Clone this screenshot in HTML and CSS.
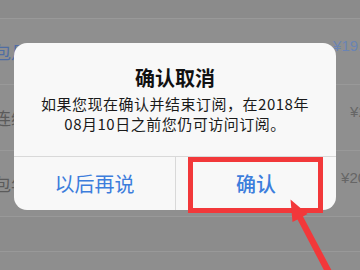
FILE: index.html
```html
<!DOCTYPE html>
<html lang="zh-CN">
<head>
<meta charset="utf-8">
<link rel="stylesheet" href="styles.css">
</head>
<body>
<div class="page">
  <div class="header"></div>
  <div class="row">
    <span class="label label-blue">包月</span>
    <span class="price price-blue price-a">¥19.90</span>
  </div>
  <div class="row">
    <span class="label">连续</span>
    <span class="price price-b">¥25.00</span>
  </div>
  <div class="row">
    <span class="label">包年</span>
    <span class="price price-c">¥20.00</span>
  </div>
  <div class="band"></div>
  <div class="footer"></div>

  <div class="dialog">
    <div class="dialog-content">
      <div class="dialog-title">确认取消</div>
      <div class="dialog-text">如果您现在确认并结束订阅，在2018年<br>08月10日之前您仍可访问订阅。</div>
    </div>
    <div class="dialog-buttons">
      <div class="btn">以后再说</div>
      <div class="btn btn-primary">确认</div>
    </div>
  </div>

  <div class="highlight"></div>
  <svg class="arrow" width="360" height="270" viewBox="0 0 360 270">
    <polygon points="290.5,199.5 307.5,214 303,216.5 333.5,274 327.5,277 297.5,219.5 292.5,222" fill="#f2383a"/>
  </svg>
</div>
</body>
</html>
```
FILE: styles.css
```css
html, body {
  margin: 0;
  padding: 0;
}
body {
  width: 360px;
  height: 270px;
  overflow: hidden;
  background: #8e8e8e;
  font-family: "Noto Sans CJK SC", "Liberation Sans", sans-serif;
}
.page {
  position: relative;
  width: 360px;
  height: 270px;
  overflow: hidden;
  display: flex;
  flex-direction: column;
}
.header {
  height: 18px;
  flex: none;
  background: #8b8b8b;
  border-bottom: 1px solid #999999;
}
.row {
  height: 65px;
  flex: none;
  display: flex;
  justify-content: space-between;
  align-items: center;
  border-bottom: 1px solid #999999;
  background: #8f8f8f;
}
.label {
  margin-left: -6px;
  font-size: 17px;
  line-height: 20px;
  color: #5b5b5b;
  white-space: nowrap;
}
.label-blue {
  color: #4f6da3;
}
.price {
  align-self: flex-start;
  padding-top: 18px;
  font-family: "Liberation Sans", sans-serif;
  font-size: 15px;
  line-height: 18px;
  color: #666666;
  white-space: nowrap;
}
.price-blue {
  color: #6a84b4;
}
.price-a { margin-right: -19px; }
.price-b { margin-right: -36px; }
.price-c { margin-right: -27px; }
.band {
  height: 34px;
  flex: none;
  background: #8c8c8c;
  border-bottom: 1px solid #999999;
}
.footer {
  flex: 1;
  background: #8e8e8e;
}

.dialog {
  position: absolute;
  left: 14px;
  top: 43px;
  width: 322px;
  height: 167px;
  border-radius: 13px;
  background: #f8f8f8;
  overflow: hidden;
  display: flex;
  flex-direction: column;
}
.dialog-content {
  height: 114px;
  box-sizing: border-box;
  padding-top: 22px;
  text-align: center;
  border-bottom: 1px solid #d9d9d9;
}
.dialog-title {
  font-size: 20px;
  line-height: 26px;
  font-weight: 600;
  color: #111111;
}
.dialog-text {
  margin-top: 3px;
  font-size: 15px;
  line-height: 20px;
  letter-spacing: 0.5px;
  color: #1a1a1a;
}
.dialog-buttons {
  flex: 1;
  display: grid;
  grid-template-columns: 1fr 1fr;
}
.btn {
  display: flex;
  align-items: center;
  justify-content: center;
  font-size: 20px;
  color: #3c7ddc;
}
.btn + .btn {
  border-left: 1px solid #d9d9d9;
}
.btn-primary {
  font-weight: 500;
}

.highlight {
  position: absolute;
  left: 188px;
  top: 157px;
  width: 135px;
  height: 56px;
  box-sizing: border-box;
  border: 5px solid #f2383a;
}
.arrow {
  position: absolute;
  left: 0;
  top: 0;
  pointer-events: none;
}
```
